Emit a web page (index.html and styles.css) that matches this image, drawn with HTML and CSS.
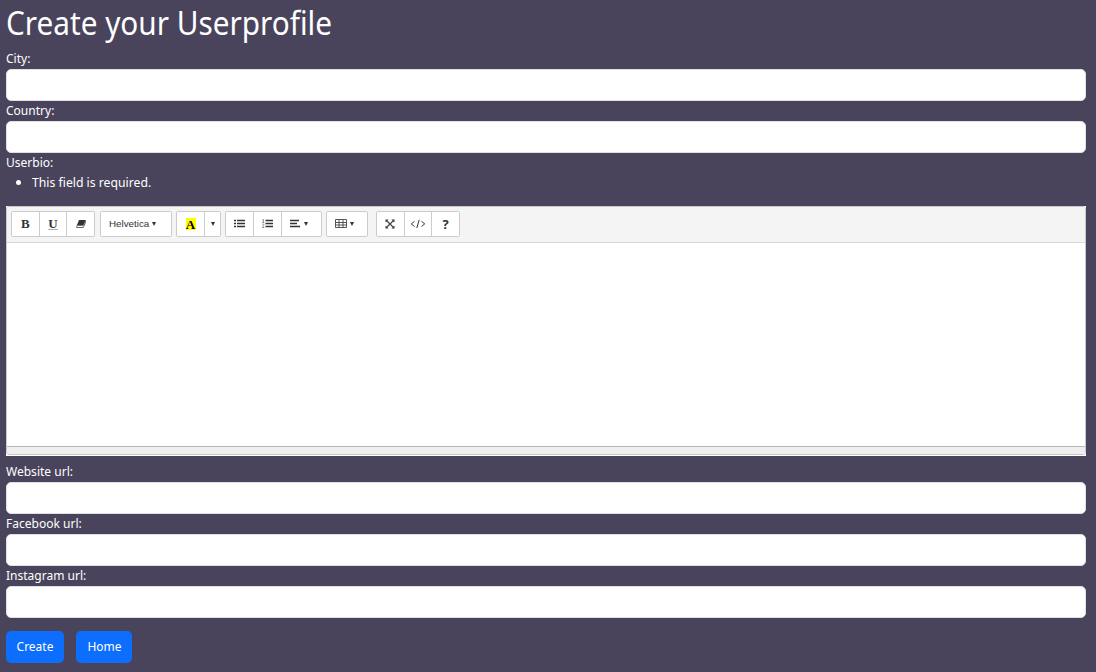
FILE: index.html
```html
<!DOCTYPE html>
<html lang="en">
<head>
<meta charset="utf-8">
<title>Create your Userprofile</title>
<link rel="stylesheet" href="styles.css">
</head>
<body>
<h1><span class="narrow">Create your Userprofile</span></h1>
<form>
  <label for="city"><span class="narrow">City:</span></label>
  <input id="city" type="text">
  <label for="country"><span class="narrow">Country:</span></label>
  <input id="country" type="text">
  <label><span class="narrow">Userbio:</span></label>
  <ul class="errors"><li><span class="narrow">This field is required.</span></li></ul>
  <div class="editor">
    <div class="frame">
      <div class="toolbar">
        <div class="group g-style">
          <button type="button" class="serif">B</button>
          <button type="button" class="serif underline">U</button>
          <button type="button"><svg width="10" height="10" viewBox="0 0 10 10"><path d="M3 1h6.5L7.5 6H1z" fill="#333"/><path d="M1 6.4h6.3L9.4 1.6v2.2L7.3 8.5H.6z" fill="#fff" stroke="#444" stroke-width=".8"/></svg></button>
        </div>
        <div class="group g-font"><button type="button" class="font">Helvetica<i class="caret spaced"></i></button></div>
        <div class="group g-color">
          <button type="button" class="serif"><span class="mark">A</span></button>
          <button type="button"><i class="caret"></i></button>
        </div>
        <div class="group g-list">
          <button type="button"><svg width="12" height="10" viewBox="0 0 12 10"><path d="M0 1.5h2M0 4.5h2M0 7.5h2" stroke="#333" stroke-width="1.4"/><path d="M3 1.5h8M3 4.5h8M3 7.5h8" stroke="#333" stroke-width="1.4"/></svg></button>
          <button type="button"><svg width="12" height="10" viewBox="0 0 12 10"><path d="M3.5 1.5H11M3.5 4.5H11M3.5 7.5H11" stroke="#333" stroke-width="1.4"/><path d="M.5 .8l.9-.5v3M0 3.4h2.3M.2 5.5c1-1 2.2-.2 1.6.7L.3 8.5h2" fill="none" stroke="#666" stroke-width=".7"/></svg></button>
          <button type="button" class="dropdown"><svg width="11" height="10" viewBox="0 0 11 10"><path d="M0 1.5h9M0 4.5h7M0 7.5h10" stroke="#333" stroke-width="1.4"/></svg><i class="caret spaced"></i></button>
        </div>
        <div class="group g-table"><button type="button" class="dropdown"><svg width="12" height="10" viewBox="0 0 12 10"><path d="M.5 .5h11v8H.5zM.5 3.5h11M.5 6h11M4 .5v8M8 .5v8" fill="none" stroke="#444" stroke-width=".9"/></svg><i class="caret spaced"></i></button></div>
        <div class="group g-view">
          <button type="button"><svg width="10" height="10" viewBox="0 0 10 10"><path d="M1.5 1.5l7 7M8.5 1.5l-7 7" stroke="#444" stroke-width="1.2"/><path d="M.5 .5h3l-3 3zM9.5 .5v3l-3-3zM.5 9.5v-3l3 3zM9.5 9.5h-3l3-3z" fill="#333"/></svg></button>
          <button type="button"><svg width="16" height="10" viewBox="0 0 16 10"><path d="M4.5 2.300L1.300 4.900l3.200 2.600M11.500 2.300l3.200 2.600-3.200 2.600M9.200 .8L6.800 9" fill="none" stroke="#333" stroke-width="1"/></svg></button>
          <button type="button" class="help">?</button>
        </div>
      </div>
      <div class="editable"></div>
      <div class="statusbar"></div>
    </div>
  </div>
  <label for="web"><span class="narrow">Website url:</span></label>
  <input id="web" type="text">
  <label for="fb"><span class="narrow">Facebook url:</span></label>
  <input id="fb" type="text">
  <label for="ig"><span class="narrow">Instagram url:</span></label>
  <input id="ig" type="text">
  <div class="actions">
    <button type="button" class="btn create"><span>Create</span></button>
    <button type="button" class="btn home"><span>Home</span></button>
  </div>
</form>
</body>
</html>
```
FILE: styles.css
```css
* { box-sizing: border-box; }
body {
  margin: 0;
  padding: 0 10px 0 6px;
  background: #49445c;
  color: #fff;
  font: 13px/18px "Noto Sans", sans-serif;
}
h1 { margin: 0; height: 49px; font-size: 32px; line-height: 45px; font-weight: 400; white-space: nowrap; }
.narrow { display: inline-block; transform: scaleX(.925); transform-origin: left; }
h1 .narrow { transform: scaleX(.929); }
.errors .narrow { transform: scaleX(.94); }
form { display: flex; flex-direction: column; }
label { height: 20px; }
input {
  width: 100%; height: 32px; padding: 0 12px;
  border: 1px solid #dee0e6; border-radius: 5px; background: #fff;
}
.errors { margin: 0 0 13px; padding-left: 26px; height: 20px; }
.editor { height: 250px; margin-bottom: 6px; background: #fff; }
.frame {
  display: flex; flex-direction: column; height: 249px; overflow: hidden;
  border: 1px solid #c8c8c8; border-radius: 3px;
}
.toolbar {
  display: flex; height: 36px; padding: 4px; flex: none;
  background: #f4f4f4; border-bottom: 1px solid #d8d8d8;
}
.group {
  display: flex; height: 26px; margin-right: 4px;
  border: 1px solid #ccc; border-radius: 2px; background: #fff; overflow: hidden;
}
.group button {
  display: flex; flex: 1; align-items: center; justify-content: center;
  min-width: 0; padding: 0; border: 0; border-right: 1px solid #ccc;
  background: #fff; color: #333;
}
.group button:last-child { border-right: 0; }
.g-style { width: 84px; margin-right: 5px; }
.g-font { width: 72px; }
.g-color { width: 45px; }
.g-color button:first-child { flex: 0 0 28px; }
.g-list { width: 97px; }
.g-list button:nth-child(-n+2) { flex: 0 0 28px; }
.g-table { width: 42px; margin-right: 8px; }
.g-view { width: 84px; }
.group .dropdown { justify-content: flex-start; padding-left: 8px; }
.group .serif { font: bold 13px/14px "Liberation Serif", serif; }
.group .underline { text-decoration: underline; text-decoration-color: #aaa; text-underline-offset: 1px; }
.group .font { justify-content: flex-start; padding: 0 0 1px 8px; font: 9.8px "Liberation Sans", sans-serif; }
.group .help { font: bold 13px "Open Sans", sans-serif; }
.mark { width: 10px; height: 12px; line-height: 13px; background: #ff0; color: #000; text-align: center; }
.caret { border: 2.5px solid transparent; border-top: 4px solid #333; border-bottom: 0; }
.spaced { margin-left: 3px; }
.editable { flex: 1; background: #fff; }
.statusbar { height: 8px; background: #efefef; border-top: 1px solid #b8b8b8; }
.actions { display: flex; gap: 12px; margin-top: 13px; }
.btn {
  height: 32px; padding: 0 0 2px; border: 0; border-radius: 5px;
  background: #0d6efd; color: #fff; font: 13px "Noto Sans", sans-serif;
}
.btn span { display: inline-block; transform: scaleX(.92); }
.create { width: 58px; }
.home { width: 56px; }
```
